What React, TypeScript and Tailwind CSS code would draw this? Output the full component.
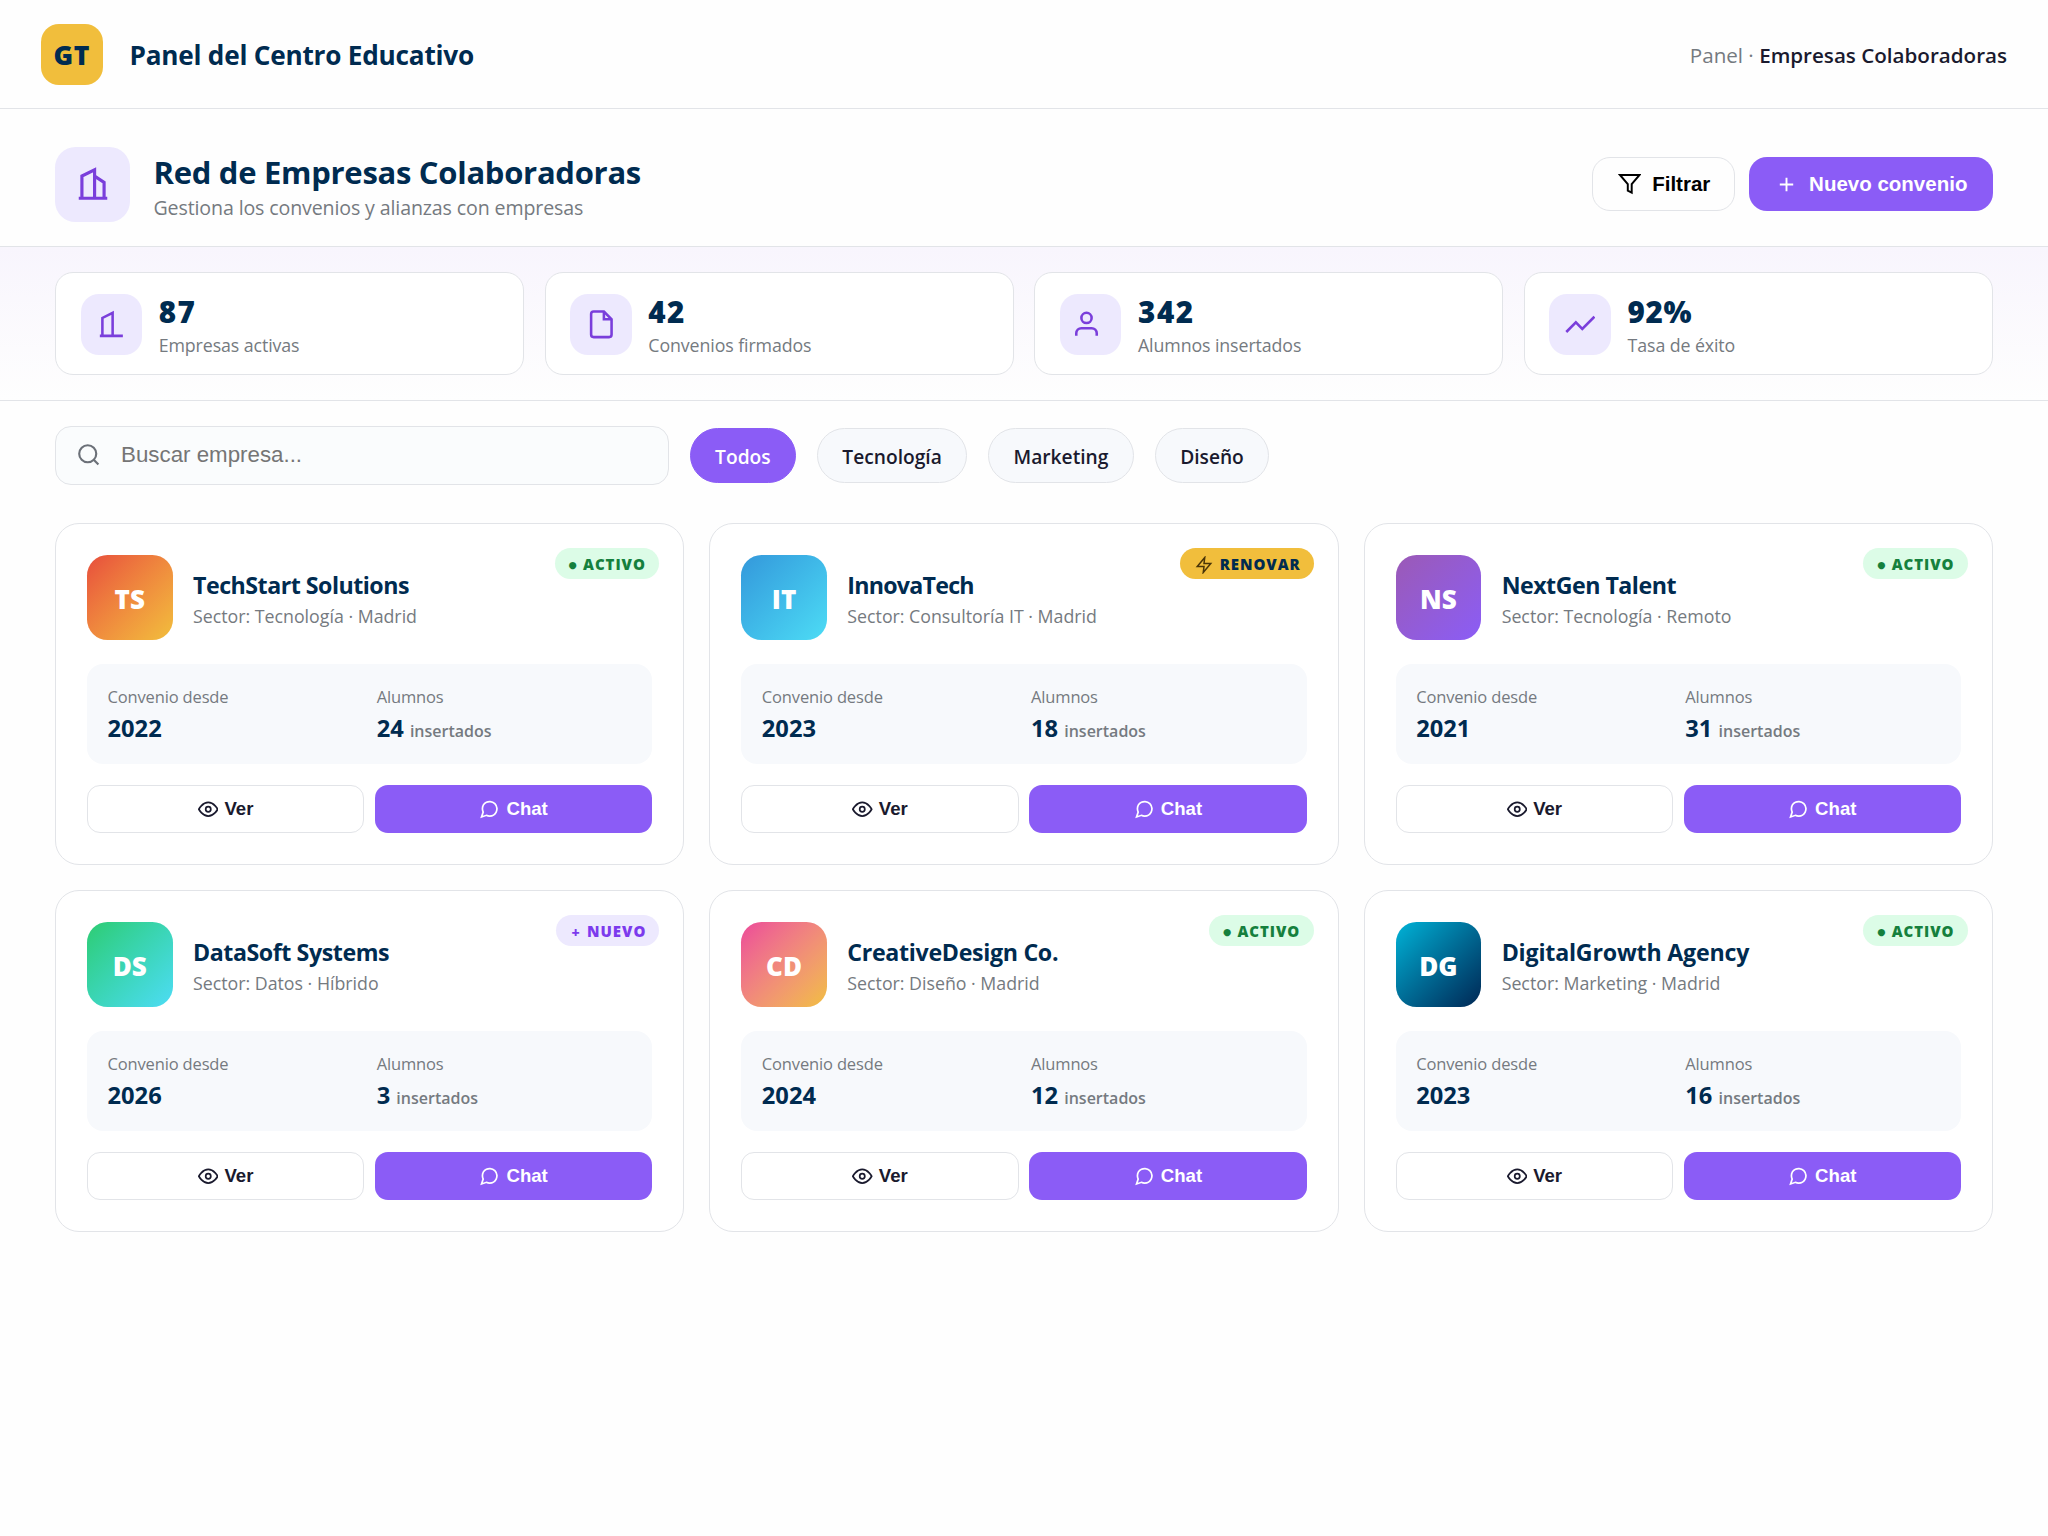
import { useState } from 'react';
import type { ReactNode } from 'react';

interface IconProps {
  size: number;
  children: ReactNode;
  className?: string;
  strokeWidth?: number;
}

function Icon({ size, children, className = '', strokeWidth = 2 }: IconProps) {
  return (
    <svg width={size} height={size} viewBox="0 0 24 24" fill="none" stroke="currentColor" strokeWidth={strokeWidth} className={`shrink-0 ${className}`}>
      {children}
    </svg>
  );
}

const stats = [
  { value: '87', label: 'Empresas activas', tracking: 'tracking-[1.4px]', icon: <path d="M3 21h18M5 21V7l8-4v18" /> },
  {
    value: '42',
    label: 'Convenios firmados',
    tracking: 'tracking-[1.4px]',
    icon: <><path d="M14 2H6a2 2 0 0 0-2 2v16a2 2 0 0 0 2 2h12a2 2 0 0 0 2-2V8z" /><path d="M14 2v6h6" /></>,
  },
  {
    value: '342',
    label: 'Alumnos insertados',
    tracking: 'tracking-[1.6px]',
    icon: <><path d="M17 21v-2a4 4 0 0 0-4-4H5a4 4 0 0 0-4 4v2" /><circle cx="9" cy="7" r="4" /></>,
  },
  { value: '92%', label: 'Tasa de éxito', tracking: 'tracking-[0.6px]', icon: <path d="M23 6l-9.5 9.5-5-5L1 18" /> },
];

const filters = ['Todos', 'Tecnología', 'Marketing', 'Diseño'];

const companies = [
  { initials: 'TS', name: 'TechStart Solutions', sector: 'Tecnología · Madrid', since: 2022, students: 24, status: 'activo', gradient: 'from-[#e74c3c] to-[#f1be3c]', tracking: 'tracking-[-0.5px]' },
  { initials: 'IT', name: 'InnovaTech', sector: 'Consultoría IT · Madrid', since: 2023, students: 18, status: 'renovar', gradient: 'from-[#3498db] to-[#4ddcf5]', tracking: 'tracking-[-0.75px]' },
  { initials: 'NS', name: 'NextGen Talent', sector: 'Tecnología · Remoto', since: 2021, students: 31, status: 'activo', gradient: 'from-[#9b59b6] to-[#8b5cf6]', tracking: 'tracking-[-0.5px]' },
  { initials: 'DS', name: 'DataSoft Systems', sector: 'Datos · Híbrido', since: 2026, students: 3, status: 'nuevo', gradient: 'from-[#2ecc71] to-[#4ddcf5]', tracking: 'tracking-[-0.43px]' },
  { initials: 'CD', name: 'CreativeDesign Co.', sector: 'Diseño · Madrid', since: 2024, students: 12, status: 'activo', gradient: 'from-[#ec4899] to-[#f1be3c]', tracking: 'tracking-[-0.32px]' },
  { initials: 'DG', name: 'DigitalGrowth Agency', sector: 'Marketing · Madrid', since: 2023, students: 16, status: 'activo', gradient: 'from-[#00b4d8] to-[#002855]', tracking: 'tracking-[-0.2px]' },
];

function StatusBadge({ status }: { status: string }) {
  const base = 'absolute top-[24.5px] right-[24px] h-[30.5px] pt-[2.5px] rounded-full flex items-center text-[15px] font-extrabold tracking-[0.95px]';
  if (status === 'renovar') {
    return (
      <span className={`${base} bg-[#f1be3c] text-[#002b50] pl-[15px] pr-[13px] gap-[6.5px]`}>
        <Icon size={18} className="text-[#4a3508]"><polygon points="13 2 3 14 12 14 11 22 21 10 12 10 13 2" /></Icon>
        RENOVAR
      </span>
    );
  }
  if (status === 'nuevo') {
    return (
      <span className={`${base} bg-[#ede9fe] text-[#7c3aed] pl-[15.5px] pr-[13px]`}>
        <span className="w-[15.5px] pt-[1px] text-[14px] tracking-normal">+</span>
        NUEVO
      </span>
    );
  }
  return (
    <span className={`${base} bg-[#dcfce7] text-[#15803d] pl-[14px] pr-[13.5px]`}>
      <span className="w-[14.5px] pt-[1px] font-['DejaVu_Sans'] text-[9.5px] tracking-normal">●</span>
      ACTIVO
    </span>
  );
}

export default function App() {
  const [active, setActive] = useState('Todos');

  return (
    <div className="min-h-[1536px] bg-[#fefefe] font-['Open_Sans',sans-serif] text-[#1a1a2e]">
      <header className="h-[109px] px-[41px] pt-px flex items-center justify-between border-b border-[#e2e4e8]">
        <div className="flex items-center gap-[27px]">
          <div className="size-[61.5px] rounded-[18px] bg-[#f1be3c] text-[#002b50] flex items-center justify-center text-[26.5px] font-extrabold tracking-[0.6px] pt-[2px]">GT</div>
          <span className="text-[26.2px] font-bold tracking-[-0.23px] text-[#002b50] pt-[2px]">Panel del Centro Educativo</span>
        </div>
        <div className="text-[20.6px] text-[#757a80] pt-px">
          Panel · <span className="font-semibold text-[#1a1a2e]">Empresas Colaboradoras</span>
        </div>
      </header>

      <section className="h-[138px] px-[55px] pt-[37.5px] flex items-start justify-between border-b border-[#e2e4e8]">
        <div className="flex gap-[23.5px]">
          <div className="size-[75px] rounded-[20.5px] bg-[#ede9fe] text-[#7a3edb] flex items-center justify-center">
            <Icon size={38}><path d="M3 21h18M5 21V7l8-4v18M19 21V11l-6-4" /></Icon>
          </div>
          <div className="pt-[7.5px]">
            <h1 className="text-[31px] leading-[36px] font-bold tracking-[-0.28px] text-[#002b50]">Red de Empresas Colaboradoras</h1>
            <p className="mt-[3.5px] text-[19.6px] leading-[28px] tracking-[-0.13px] text-[#757a80]">Gestiona los convenios y alianzas con empresas</p>
          </div>
        </div>
        <div className="flex gap-[13.5px] mt-[10px] font-['Liberation_Sans',Arial,sans-serif] text-[20.5px] font-bold">
          <button className="h-[54px] w-[143px] pl-px pt-px rounded-[18px] border border-[#e2e4e8] text-black flex items-center justify-center gap-[11px]">
            <Icon size={23.5}><polygon points="22 3 2 3 10 12.46 10 19 14 21 14 12.46 22 3" /></Icon>
            Filtrar
          </button>
          <button className="h-[54px] w-[244.5px] pl-px pt-px rounded-[18px] bg-[#8b5cf6] text-white flex items-center justify-center gap-[11px]">
            <Icon size={23}><path d="M12 5v14M5 12h14" /></Icon>
            Nuevo convenio
          </button>
        </div>
      </section>

      <section className="h-[153.5px] px-[55px] pt-[25px] grid grid-cols-4 gap-[20.5px] border-b border-[#e2e4e8] bg-gradient-to-b from-[#f8f5fd] to-[#fefefe]">
        {stats.map(s => (
          <div key={s.label} className="h-[103px] px-[24.5px] pt-[1.5px] rounded-[18px] border border-[#e2e4e8] bg-white flex items-center gap-[16.7px]">
            <div className="size-[61.5px] rounded-[18px] bg-[#ede9fe] text-[#7a3edb] flex items-center justify-center">
              <Icon size={30.7}>{s.icon}</Icon>
            </div>
            <div className="pt-[3px]">
              <div className={`text-[29.6px] leading-[34px] font-extrabold text-[#002b50] ${s.tracking}`}>{s.value}</div>
              <div className="mt-[4px] text-[17.8px] leading-[24px] tracking-[-0.1px] text-[#757a80]">{s.label}</div>
            </div>
          </div>
        ))}
      </section>

      <section className="px-[55px] pt-[25px] flex items-center gap-[20.5px]">
        <div className="w-[614px] h-[59px] px-[19.5px] rounded-[16px] border border-[#e2e4e8] bg-[#fafcfd] flex items-center gap-[20px]">
          <Icon size={25.6} className="text-[#6b7078]"><circle cx="11" cy="11" r="8" /><path d="M21 21l-4.35-4.35" /></Icon>
          <input placeholder="Buscar empresa..." className="flex-1 bg-transparent outline-none font-['Liberation_Sans',Arial,sans-serif] text-[22.3px] placeholder:text-[#757575]" />
        </div>
        {filters.map(f => (
          <button
            key={f}
            onClick={() => setActive(f)}
            className={`h-[55px] px-[24.6px] pt-[3px] mt-px rounded-full border text-[19.2px] font-semibold ${active === f ? 'bg-[#8b5cf6] border-[#8b5cf6] text-white' : 'bg-[#f7f9fc] border-[#e2e4e8] text-[#1a1a2e]'}`}
          >
            {f}
          </button>
        ))}
      </section>

      <main className="px-[55px] pt-[38px] grid grid-cols-3 gap-[25px]">
        {companies.map(c => (
          <article key={c.name} className="relative h-[342px] px-[31px] pt-[31px] rounded-[24px] border border-[#e2e4e8] bg-white">
            <StatusBadge status={c.status} />
            <div className="flex items-center gap-[20.5px] mb-[24px]">
              <div className={`size-[85.5px] pt-[4px] rounded-[20.5px] bg-linear-135 ${c.gradient} text-white flex items-center justify-center text-[26px] font-extrabold`}>{c.initials}</div>
              <div className="pt-[4px]">
                <h3 className={`text-[23.2px] leading-[30px] font-bold text-[#002b50] ${c.tracking}`}>{c.name}</h3>
                <p className="mt-[4px] text-[17.8px] leading-[24px] tracking-[-0.01px] text-[#757a80]">Sector: {c.sector}</p>
              </div>
            </div>
            <div className="h-[100px] px-[20.5px] pt-[21.5px] grid grid-cols-2 content-start gap-[14px] rounded-[16px] bg-[#f7f9fc]">
              <div>
                <div className="text-[16.5px] leading-[22px] tracking-[-0.15px] text-[#757a80]">Convenio desde</div>
                <div className="mt-[4.5px] text-[23.7px] leading-[32px] font-bold text-[#002b50]">{c.since}</div>
              </div>
              <div>
                <div className="text-[16.5px] leading-[22px] tracking-[-0.15px] text-[#757a80]">Alumnos</div>
                <div className="mt-[4.5px] text-[23.7px] leading-[32px] font-bold text-[#002b50]">
                  {c.students} <span className="text-[16px] font-semibold text-[#757a80]">insertados</span>
                </div>
              </div>
            </div>
            <div className="mt-[21px] grid grid-cols-2 gap-[10.5px] font-['Liberation_Sans',Arial,sans-serif] text-[18.6px] font-bold">
              <button className="h-[48px] rounded-[13px] border border-[#e2e4e8] text-[#1a1a2e] flex items-center justify-center gap-[6px]">
                <Icon size={20.5}><path d="M1 12s4-8 11-8 11 8 11 8-4 8-11 8-11-8-11-8z" /><circle cx="12" cy="12" r="3" /></Icon>
                Ver
              </button>
              <button className="h-[48px] rounded-[13px] bg-[#8b5cf6] text-white flex items-center justify-center gap-[6.5px]">
                <Icon size={20.5}><path d="M21 11.5a8.38 8.38 0 0 1-.9 3.8 8.5 8.5 0 0 1-7.6 4.7 8.38 8.38 0 0 1-3.8-.9L3 21l1.9-5.7a8.38 8.38 0 0 1-.9-3.8 8.5 8.5 0 0 1 4.7-7.6 8.38 8.38 0 0 1 3.8-.9h.5a8.48 8.48 0 0 1 8 8v.5z" /></Icon>
                Chat
              </button>
            </div>
          </article>
        ))}
      </main>
    </div>
  );
}
